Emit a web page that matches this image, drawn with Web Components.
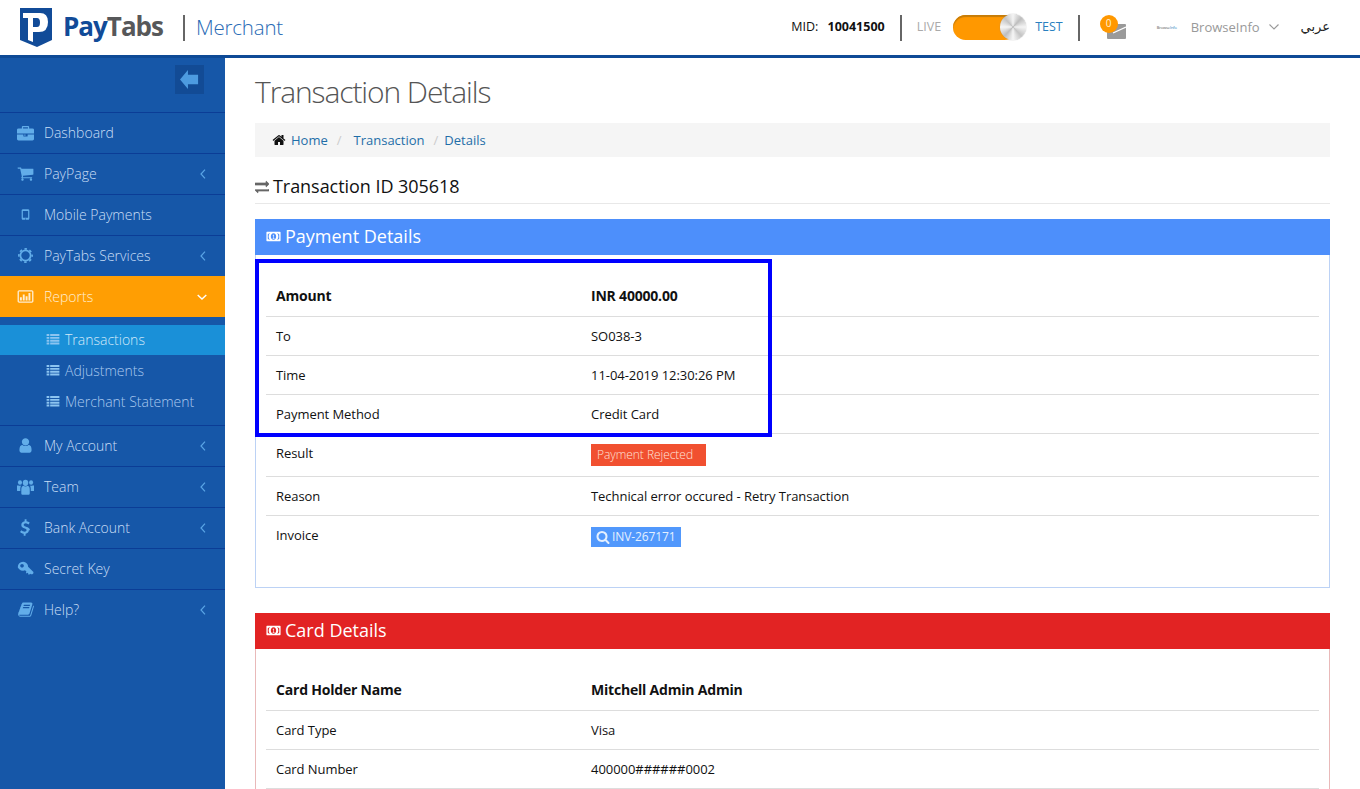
<!DOCTYPE html>
<html>
<head>
<meta charset="utf-8">
<title>PayTabs Merchant</title>
<style>
  html, body { margin: 0; padding: 0; height: 789px; overflow: hidden; background: #fff; }
  body { font-family: "Open Sans", sans-serif; font-size: 13px; color: #111; }
</style>
</head>
<body>
<pay-app></pay-app>

<script>
const ICONS = {
  briefcase: '<path d="M640 256h512V128H640v128zm1152 640v480q0 66-47 113t-113 47H160q-66 0-113-47T0 1376V896h672v160q0 26 19 45t45 19h320q26 0 45-19t19-45V896h672zm-896 0v128H768V896h128zm896-480v384H0V416q0-66 47-113t113-47h352V96q0-40 28-68t68-28h576q40 0 68 28t28 68v160h352q66 0 113 47t47 113z" transform="translate(0 208)"/>',
  cart: '<path d="M704 1536q0 52-38 90t-90 38-90-38-38-90 38-90 90-38 90 38 38 90zm896 0q0 52-38 90t-90 38-90-38-38-90 38-90 90-38 90 38 38 90zm128-1088v512q0 24-16.500 42.500t-40.500 21.500l-1044 122q13 60 13 70 0 16-24 64h920q26 0 45 19t19 45-19 45-45 19h-1024q-26 0-45-19t-19-45q0-11 8-31.500t16-36 21.500-40 15.500-29.500l-177-823h-204q-26 0-45-19t-19-45 19-45 45-19h256q16 0 28.500 6.500t19.500 15.500 13 24.500 8 26 5.500 29.500 4.500 26h1201q26 0 45 19t19 45z"/>',
  mobile: '<path fill-rule="evenodd" d="M640 340h512q70 0 110 40t40 110v812q0 70-40 110t-110 40H640q-70 0-110-40t-40-110V490q0-70 40-110t110-40zm-20 190v700h552V530H620zm276 780a56 56 0 1 0 .1 0z"/>',
  gear: '<circle cx="896" cy="896" r="540" fill="none" stroke="currentColor" stroke-width="190"/><circle cx="896" cy="896" r="700" fill="none" stroke="currentColor" stroke-width="170" stroke-dasharray="275 275" stroke-dashoffset="137"/>',
  chart: '<path fill-rule="evenodd" d="M230 230h1332q70 0 120 50t50 120v992q0 70-50 120t-120 50H230q-70 0-120-50t-50-120V400q0-70 50-120t120-50zm-30 130v1072h1392V360H200zm110 620h200v340H310zm300-300h200v640H610zm300 200h200v440H910zm300-360h200v800h-200z"/>',
  list: '<path d="M180 340h300v220H180zm400 0h1032v220H580zM180 660h300v220H180zm400 0h1032v220H580zM180 980h300v220H180zm400 0h1032v220H580zM180 1300h300v220H180zm400 0h1032v220H580z"/>',
  user: '<path d="M1536 1399q0 109-62.500 187t-150.500 78h-854q-88 0-150.500-78t-62.500-187q0-85 8.500-160.500t31.500-152 58.500-131 94-89 134.500-34.500q131 128 313 128t313-128q76 0 134.500 34.500t94 89 58.500 131 31.500 152 8.500 160.500zm-256-887q0 159-112.500 271.500t-271.500 112.500-271.500-112.500-112.500-271.500 112.500-271.500 271.500-112.500 271.500 112.500 112.500 271.500z"/>',
  users: '<g transform="translate(-60 -160) scale(1.07 1.2)"><circle cx="896" cy="560" r="270"/><circle cx="350" cy="530" r="200"/><circle cx="1442" cy="530" r="200"/><path d="M480 1500v-340q0-300 200-340 90 70 216 70t216-70q200 40 200 340v340q0 110-120 110H600q-120 0-120-110z"/><path d="M20 1200V960q0-180 130-200 90 50 200 50 60 0 120-20-80 90-90 280v200H100q-80 0-80-70zM1772 1200V960q0-180-130-200-90 50-200 50-60 0-120-20 80 90 90 280v200h280q80 0 80-70z"/></g>',
  dollar: '<path d="M1262 1137q0 153-99.500 263.500T904 1536v175q0 14-9 23t-23 9H737q-13 0-22.500-9.500T705 1711v-175q-66-9-127.500-31T477 1460.500t-74-48-46.500-37.500-17.500-18q-17-21-2-41l103-135q7-10 23-12 15-2 24 9l2 2q113 99 243 125 37 8 74 8 81 0 142.500-43t61.500-122q0-28-15-53t-33.500-42-58.500-37.500-66-32-80-32.500q-39-16-61.500-25T733 948.500t-62.500-31T614 882t-53.500-42.500-43.500-49-35.500-58-21-66.500-8.500-78q0-138 98-242t255-134V32q0-13 9.500-22.500T837 0h135q14 0 23 9t9 23v176q57 6 110.500 23t87 33.500T1265 302t39 29 15 14q17 18 5 38l-81 146q-8 15-23 16-14 3-27-7-3-3-14.500-12t-39-26.500-58.500-32-74.500-26T921 430q-95 0-155 43t-60 111q0 26 8.500 48t29.500 41.500 39.500 33 56 31 60.500 27 70 27.500q53 20 81 31.500t76 35 75.500 42.500 62 50 53 63.500 31.500 76.500 13 94z" transform="translate(0 24)"/>',
  key: '<path fill-rule="evenodd" d="M640 190q240 0 400 170 140 150 130 350l560 560v130l-110 110h-150l-70-70-90 90h-130v-130l-60-60-90 90-90-90 60-100-150-150q-100 50-210 50-240 0-400-170T80 760q0-240 160-405t400-165zm-110 220q-80 0-135 55t-55 135q0 80 55 135t135 55q80 0 135-55t55-135q0-80-55-135t-135-55z"/>',
  book: '<path d="M1757 480q41 59 19 134l-275 906q-19 64-76.500 107.500T1302 1671H379q-77 0-148.500-53.500T131 1486q-24-67-2-127 0-4 3-27t4-37q1-8-3-21.500t-3-19.500q2-11 8-21t16.500-23.500T171 1185q23-38 45-91.500t30-91.500q3-10 .5-30t-.5-28q3-11 17-28t17-23q21-36 42-92t25-90q1-9-2.500-32t.5-28q4-13 22-30.500t22-22.500q19-26 42.500-84.500T459 443q1-8-3-25.500t-2-26.500q2-8 9-18t18-23 17-21q8-12 16.500-30.500t15-35 16-36 19.500-32 26.500-23.500 36-11.500T675 165l-1 3q38-9 51-9h761q74 0 114 56t18 130l-274 906q-36 119-71.500 153.500T1144 1439H275q-27 0-38 15-11 16-1 43 24 70 144 70h923q29 0 56-15.500t35-41.500l300-987q7-22 5-57 38 15 58 43zm-1064 2q-4 13 2 22.500t20 9.500h608q13 0 25.500-9.500T1365 482l21-64q4-13-2-22.500t-20-9.500H756q-13 0-25.500 9.500T714 418zm-83 256q-4 13 2 22.500t20 9.500h608q13 0 25.500-9.500T1282 738l21-64q4-13-2-22.500t-20-9.500H673q-13 0-25.500 9.500T631 674z"/>',
  home: '<path d="M1472 992v480q0 26-19 45t-45 19h-384v-384h-256v384h-384q-26 0-45-19t-19-45v-480q0-1 .5-3t.5-3l575-474 575 474q1 2 1 6zm223-69l-62 74q-8 9-21 11h-3q-13 0-21-7l-692-577-692 577q-12 8-24 7-13-2-21-11l-62-74q-8-10-7-23.500t11-21.500l719-599q32-26 76-26t76 26l244 204v-195q0-14 9-23t23-9h192q14 0 23 9t9 23v408l219 182q10 8 11 21.500t-7 23.500z"/>',
  search: '<path d="M1216 832q0-185-131.500-316.500t-316.500-131.500-316.500 131.500-131.500 316.500 131.500 316.500 316.500 131.500 316.500-131.500 131.500-316.500zm512 832q0 52-38 90t-90 38q-54 0-90-38l-343-342q-179 124-399 124-143 0-273.500-55.500t-225-150-150-225-55.500-273.500 55.500-273.500 150-225 225-150 273.500-55.500 273.500 55.500 225 150 150 225 55.500 273.500q0 220-124 399l343 343q37 37 37 90z"/>',
  exchange: '<path stroke="currentColor" stroke-width="90" d="M1792 1184v192q0 13-9.500 22.500t-22.500 9.500H384v192q0 13-9.500 22.500T352 1632q-12 0-24-10L8 1302q-8-8-8-22 0-13 9.500-22.500T32 1248h1728q13 0 22.500 9.500t9.500 22.500zM1792 512q0 14-9 23l-320 320q-9 9-23 9-13 0-22.500-9.500T1408 832V640H32q-13 0-22.500-9.500T0 608V416q0-13 9.500-22.500T32 384h1376V192q0-14 9-23t23-9q12 0 24 10l319 319q9 9 9 23z"/>',
  money: '<path fill-rule="evenodd" d="M120 340h1552q70 0 70 70v972q0 70-70 70H120q-70 0-70-70V410q0-70 70-70zm776 180q-150 0-235 110t-85 266 85 266 235 110 235-110 85-266-85-266-235-110zM340 500q0 110-130 140v512q130 30 130 140h110q-130-170-130-396t130-396H340zm1002 0q130 170 130 396t-130 396h110q0-110 130-140V640q-130-30-130-140h-110zM830 680h110v390h70v90H800v-90h70V810h-60z"/>',
  back: '<path d="M1426 600v590H800v292L310 896l490-586v290z"/>'
};

function icon(name, size, color) {
  return `<svg viewBox="0 0 1792 1792" width="${size}" height="${size}" fill="${color}" style="display:block;color:${color}">${ICONS[name]}</svg>`;
}

class PayHeader extends HTMLElement {
  constructor() {
    super();
    this.attachShadow({ mode: 'open' });
    this.shadowRoot.innerHTML = `
    <style>
      :host { display: flex; align-items: center; height: 55px; border-bottom: 3px solid #0e4a96; background: #fff; padding: 0 30px 0 20px; }
      .brand { display: flex; align-items: center; }
      .word { font-family: "Open Sans"; font-weight: 700; font-size: 26px; letter-spacing: -1px; margin-left: 11px; margin-top: -3px; }
      .word b { color: #114b98; font-weight: 700; }
      .word i { color: #57585a; font-style: normal; }
      .sep { width: 2px; height: 26px; background: #666; }
      .merchant { font-weight: 300; font-size: 20.5px; color: #2a6bb5; margin-left: 11px; margin-top: -2px; letter-spacing: -.2px; }
      .right { margin-left: auto; display: flex; align-items: center; color: #111; }
      .mid { font-size: 12.5px; margin-top: -2px; }
      .mid b { margin-left: 6px; }
      .live { font-size: 12.5px; color: #aaa; margin: -2px 12px 0 15px; }
      .test { font-size: 12.5px; color: #2a80c0; margin: -2px 15px 0 18px; }
      .toggle { position: relative; width: 64px; height: 25px; border-radius: 13px; background: #ff9800; box-shadow: inset 0 2px 1px #c67c08; }
      .knob { position: absolute; right: -9px; top: -1px; width: 26px; height: 26px; border-radius: 50%; background: conic-gradient(#f4f4f4,#bdbdbd 12%,#f4f4f4 25%,#c4c4c4 38%,#f6f6f6 50%,#bdbdbd 62%,#f6f6f6 75%,#c4c4c4 88%,#f4f4f4); box-shadow: 0 0 1px #888; }
      .mail { position: relative; width: 19px; height: 15px; margin: 8px 0 0 27px; }
      .mail svg { display: block; }
      .count { position: absolute; left: -7px; top: -9px; width: 18px; height: 18px; border-radius: 50%; background: #ff9800; color: #fff2d8; font-size: 10px; line-height: 17px; text-align: center; }
      .tiny { font-size: 4px; color: #555; width: 24px; margin-left: 31px; white-space: nowrap; letter-spacing: -.1px; }
      .tiny i { font-style: normal; color: #2a80c0; }
      .user { color: #999; font-size: 13px; margin-left: 10px; margin-top: -2px; }
      .caret { margin-left: 9px; margin-top: -2px; }
      .ar { font-family: "DejaVu Sans", sans-serif; font-size: 13px; margin-left: 22px; color: #222; margin-top: -2px; }
    </style>
    <div class="brand">
      <svg width="32" height="39" viewBox="0 0 32 39" style="margin-top:-1px"><path fill="#114b98" d="M0 0h32v32l-15 7-17-7z"/><path fill-rule="evenodd" fill="#fff" d="M3 5h17q8 0 8 9 0 10-9 10h-6v10l-5-2V10H3zm10 5v9h4q3 0 3-4.500T17 10z"/></svg>
      <span class="word"><b>Pay</b><i>Tabs</i></span>
      <span class="sep" style="margin-left:20px"></span>
      <span class="merchant">Merchant</span>
    </div>
    <div class="right">
      <span class="mid">MID: <b>10041500</b></span>
      <span class="sep" style="margin-left:15px"></span>
      <span class="live">LIVE</span>
      <span class="toggle"><span class="knob"></span></span>
      <span class="test">TEST</span>
      <span class="sep"></span>
      <span class="mail">
        <svg width="19" height="15" viewBox="0 0 19 15"><path fill="#9a9a9a" d="M1 0h17q1 0 1 1v13q0 1-1 1H1q-1 0-1-1V1q0-1 1-1z"/><path d="M6 9l13-6" fill="none" stroke="#fff" stroke-width="1.300"/></svg>
        <span class="count">0</span>
      </span>
      <span class="tiny">Browse<i>Info</i></span>
      <span class="user">BrowseInfo</span>
      <svg class="caret" width="10" height="6" viewBox="0 0 10 6"><path d="M.5.5L5 5 9.500.5" fill="none" stroke="#999" stroke-width="1.100"/></svg>
      <span class="ar">عربي</span>
    </div>`;
  }
}

class NavItem extends HTMLElement {
  constructor() {
    super();
    this.attachShadow({ mode: 'open' });
  }
  connectedCallback() {
    const active = this.hasAttribute('active');
    const arrow = this.getAttribute('arrow');
    let caret = '';
    if (arrow === 'left') caret = '<svg class="caret" width="6" height="10" viewBox="0 0 6 10"><path d="M5 .7L1 5l4 4.300" fill="none" stroke="#5aa5e6" stroke-width="1.200"/></svg>';
    if (arrow === 'down') caret = '<svg class="caret" style="right:18px;top:18px" width="10" height="6" viewBox="0 0 10 6"><path d="M.7 1L5 5l4.300-4" fill="none" stroke="#fff" stroke-width="1.400"/></svg>';
    this.shadowRoot.innerHTML = `
    <style>
      :host { display: block; position: relative; height: 40px; border-bottom: 1px solid #0b3d96; }
      :host([active]) { background: #ff9e03; margin-top: -1px; height: 41px; border-bottom: 0; }
      .row { display: flex; align-items: center; height: 38px; color: #c9def6; font-size: 14px; font-weight: 300; }
      :host([active]) .row { color: #ffeed2; height: 40px; }
      .ico { width: 18px; margin-left: 16px; margin-right: 10px; display: flex; justify-content: center; }
      .caret { position: absolute; right: 19px; top: 15px; }
    </style>
    <div class="row">
      <span class="ico">${icon(this.getAttribute('icon'), 17, active ? '#ffeed2' : '#62ade9')}</span>
      <slot></slot>
      ${caret}
    </div>`;
  }
}

class SubItem extends HTMLElement {
  constructor() {
    super();
    this.attachShadow({ mode: 'open' });
    this.shadowRoot.innerHTML = `
    <style>
      :host { display: flex; align-items: center; height: 28px; padding-bottom: 2px; margin-bottom: 1px; padding-left: 45px; color: #a9c8ee; font-size: 14px; font-weight: 300; }
      :host([active]) { background: #1a90d8; color: #d3e9f8; }
      .ico { margin-right: 4px; }
    </style>
    <span class="ico">${icon('list', 16, '#8cc4f0')}</span><slot></slot>`;
  }
}

class PaySidebar extends HTMLElement {
  constructor() {
    super();
    this.attachShadow({ mode: 'open' });
    this.shadowRoot.innerHTML = `
    <style>
      :host { display: block; width: 225px; flex: none; background: #1657a8; height: 731px; overflow: hidden; }
      .top { border-bottom: 1px solid #0b3d96; display: flex; justify-content: flex-end; box-sizing: border-box; height: 55px; padding: 7px 21px 0 0; }
      .back { width: 29px; height: 29px; background: #124b95; display: flex; align-items: center; justify-content: center; }
      .sub { padding-top: 8px; height: 100px; border-bottom: 1px solid #0b3d96; }
    </style>
    <div class="top"><span class="back">${icon('back', 29, '#4d9be0')}</span></div>
    <nav-item icon="briefcase">Dashboard</nav-item>
    <nav-item icon="cart" arrow="left">PayPage</nav-item>
    <nav-item icon="mobile">Mobile Payments</nav-item>
    <nav-item icon="gear" arrow="left">PayTabs Services</nav-item>
    <nav-item icon="chart" arrow="down" active>Reports</nav-item>
    <div class="sub">
      <sub-item active>Transactions</sub-item>
      <sub-item>Adjustments</sub-item>
      <sub-item>Merchant Statement</sub-item>
    </div>
    <nav-item icon="user" arrow="left">My Account</nav-item>
    <nav-item icon="users" arrow="left">Team</nav-item>
    <nav-item icon="dollar" arrow="left">Bank Account</nav-item>
    <nav-item icon="key">Secret Key</nav-item>
    <nav-item icon="book" arrow="left" style="border-bottom:0">Help?</nav-item>`;
  }
}

class PayCrumbs extends HTMLElement {
  constructor() {
    super();
    this.attachShadow({ mode: 'open' });
    this.shadowRoot.innerHTML = `
    <style>
      :host { display: flex; align-items: center; height: 34px; background: #f5f5f5; padding-left: 17px; font-size: 13px; color: #1f6ea8; }
      .h { margin-right: 5px; }
      .s { color: #ccc; margin: 0 9px; }
    </style>
    <span class="h">${icon('home', 14, '#111')}</span>
    <span>Home</span><span class="s" style="margin-right:12px">/</span><span>Transaction</span><span class="s" style="margin-right:6px">/</span><span>Details</span>`;
  }
}

class PayPanel extends HTMLElement {
  constructor() {
    super();
    this.attachShadow({ mode: 'open' });
  }
  connectedCallback() {
    const color = this.getAttribute('color');
    this.shadowRoot.innerHTML = `
    <style>
      :host { display: block; border: 1px solid ${this.getAttribute('edge')}; border-top: 0; margin-bottom: 25px; }
      .head { height: 34px; padding-bottom: 2px; margin: 0 -1px; padding-left: 11px; background: ${color}; color: #fff; font-size: 18px; display: flex; align-items: center; gap: 4px; }
      .body { padding: 21px 10px 32px; }
    </style>
    <div class="head">${icon('money', 15, '#fff')}<span>${this.getAttribute('title')}</span></div>
    <div class="body"><slot></slot></div>`;
  }
}

class PayRow extends HTMLElement {
  constructor() {
    super();
    this.attachShadow({ mode: 'open' });
  }
  connectedCallback() {
    this.shadowRoot.innerHTML = `
    <style>
      :host { display: grid; grid-template-columns: 315px 1fr; padding: 8px 10px; line-height: 22px; font-size: 13px; letter-spacing: -.05px; border-top: 1px solid #ddd; min-height: 22px; }
      :host(:first-child) { border-top: 0; }
      :host([head]) { font-size: 14px; font-weight: 700; letter-spacing: -.2px; padding-top: 9px; padding-bottom: 9px; }
      .val { display: block; }
    </style>
    <span>${this.getAttribute('label') || ''}</span><span class="val"><slot></slot></span>`;
  }
}

class PayBadge extends HTMLElement {
  constructor() {
    super();
    this.attachShadow({ mode: 'open' });
    this.shadowRoot.innerHTML = `
    <style>
      :host { display: flex; width: max-content; align-items: center; gap: 2px; color: #ffe2d8; background: #f15030; font-size: 12px; font-weight: 300; height: 22px; padding: 0 13px 0 6px; box-sizing: border-box; margin: 2px 0; }
      :host([kind=info]) { background: #5198fc; color: #e4f0ff; font-weight: 400; letter-spacing: -.1px; height: 20px; padding: 0 5px; margin: 3px 0 0; }
    </style>
    <slot name="icon"></slot><slot></slot>`;
  }
}

class PayContent extends HTMLElement {
  constructor() {
    super();
    this.attachShadow({ mode: 'open' });
    this.shadowRoot.innerHTML = `
    <style>
      :host { display: block; flex: 1; min-width: 0; padding: 0 30px; height: 731px; overflow: hidden; }
      h1 { margin: 0; padding-top: 15px; height: 50px; font-weight: 300; font-size: 30px; line-height: 38px; color: #555; letter-spacing: -1.1px; }
      h2 { margin: 0; height: 47px; box-sizing: border-box; border-bottom: 1px solid #e8e8e8; font-weight: 400; font-size: 18px; line-height: 26px; letter-spacing: -.05px; padding-top: 16px; display: flex; gap: 4px; align-items: flex-start; }
      h2 span { margin-top: 7px; }
      .gap { height: 15px; }
    </style>
    <h1>Transaction Details</h1>
    <pay-crumbs></pay-crumbs>
    <h2><span>${icon('exchange', 14, '#666')}</span>Transaction ID 305618</h2>
    <div class="gap"></div>
    <slot></slot>`;
  }
}

class PayApp extends HTMLElement {
  constructor() {
    super();
    this.attachShadow({ mode: 'open' });
    this.shadowRoot.innerHTML = `
    <style>
      :host { display: block; position: relative; height: 789px; overflow: hidden; font-family: "Open Sans", sans-serif; }
      .main { display: flex; }
      .mark { position: absolute; left: 255px; top: 259px; width: 517px; height: 178px; border: 4px solid #0000ff; box-sizing: border-box; pointer-events: none; }
    </style>
    <pay-header></pay-header>
    <div class="main">
      <pay-sidebar></pay-sidebar>
      <pay-content>
        <pay-panel title="Payment Details" color="#4d8ffb" edge="#bcd2f5">
          <pay-row head label="Amount">INR 40000.00</pay-row>
          <pay-row label="To">SO038-3</pay-row>
          <pay-row label="Time">11-04-2019 12:30:26 PM</pay-row>
          <pay-row label="Payment Method">Credit Card</pay-row>
          <pay-row label="Result"><pay-badge>Payment Rejected</pay-badge></pay-row>
          <pay-row label="Reason">Technical error occured - Retry Transaction</pay-row>
          <pay-row label="Invoice"><pay-badge kind="info"><span slot="icon" id="lens"></span>INV-267171</pay-badge></pay-row>
        </pay-panel>
        <pay-panel title="Card Details" color="#e22323" edge="#e9b9b9">
          <pay-row head label="Card Holder Name">Mitchell Admin Admin</pay-row>
          <pay-row label="Card Type">Visa</pay-row>
          <pay-row label="Card Number">400000######0002</pay-row>
          <pay-row></pay-row>
        </pay-panel>
      </pay-content>
    </div>
    <div class="mark"></div>`;
    this.shadowRoot.getElementById('lens').innerHTML = icon('search', 14, '#e4f0ff');
  }
}

customElements.define('pay-header', PayHeader);
customElements.define('nav-item', NavItem);
customElements.define('sub-item', SubItem);
customElements.define('pay-sidebar', PaySidebar);
customElements.define('pay-crumbs', PayCrumbs);
customElements.define('pay-panel', PayPanel);
customElements.define('pay-row', PayRow);
customElements.define('pay-badge', PayBadge);
customElements.define('pay-content', PayContent);
customElements.define('pay-app', PayApp);
</script>
</body>
</html>
